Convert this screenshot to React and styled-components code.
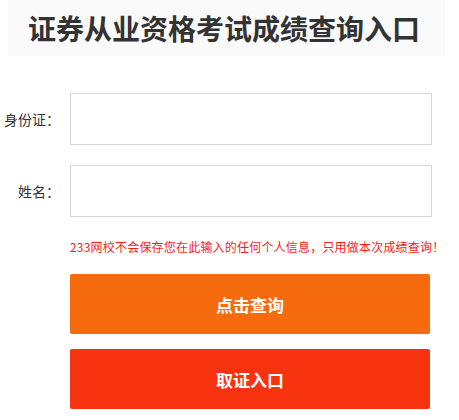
import React from "react"
import styled, { createGlobalStyle } from "styled-components"

const GlobalStyle = createGlobalStyle`
    html, body {
        margin: 0;
        padding: 0;
        background: #fff;
        font-family: "Noto Sans CJK SC", "Noto Sans", sans-serif;
    }
`

const Page = styled.div`
    padding: 0 14px 0 8px;
`

const TitleBar = styled.div`
    height: 56px;
    background: #fafafa;
    display: flex;
    align-items: center;
    padding-left: 20px;
`

const Title = styled.h1`
    margin: 0;
    font-size: 28px;
    font-weight: 700;
    color: #333;
    line-height: 1;
    white-space: nowrap;
    font-family: "Noto Sans CJK SC", sans-serif;
`

const Form = styled.div`
    margin-top: 37px;
    display: flex;
    flex-direction: column;
`

const Row = styled.div`
    display: flex;
    align-items: center;
    margin-bottom: ${props => props.gap || 0}px;
`

const Label = styled.label`
    width: 60px;
    margin-left: -8px;
    margin-right: 10px;
    text-align: right;
    font-size: 14px;
    color: #333;
    flex-shrink: 0;
    white-space: nowrap;
`

const Input = styled.input`
    width: 362px;
    height: 52px;
    box-sizing: border-box;
    border: 1px solid #d6d6d6;
    outline: none;
    padding: 0 10px;
    font-size: 14px;
`

const Notice = styled.p`
    margin: 24px 0 0 62px;
    font-size: 12px;
    line-height: 11px;
    letter-spacing: 0.2px;
    color: #ff1a1a;
    white-space: nowrap;
`

const Button = styled.button`
    display: block;
    width: 360px;
    height: 60px;
    margin: ${props => props.top}px 0 0 62px;
    border: none;
    border-radius: 2px;
    background: ${props => props.color};
    color: #fff;
    font-family: "Noto Sans CJK SC", sans-serif;
    font-size: 17px;
    font-weight: 700;
    cursor: pointer;
`

export default function App() {
    return (
        <Page>
            <GlobalStyle />
            <TitleBar>
                <Title>证券从业资格考试成绩查询入口</Title>
            </TitleBar>
            <Form>
                <Row gap={20}>
                    <Label>身份证：</Label>
                    <Input type="text" />
                </Row>
                <Row>
                    <Label>姓名：</Label>
                    <Input type="text" />
                </Row>
            </Form>
            <Notice>233网校不会保存您在此输入的任何个人信息，只用做本次成绩查询！</Notice>
            <Button top={22} color="#f56b0e">点击查询</Button>
            <Button top={15} color="#f7330f">取证入口</Button>
        </Page>
    )
}
